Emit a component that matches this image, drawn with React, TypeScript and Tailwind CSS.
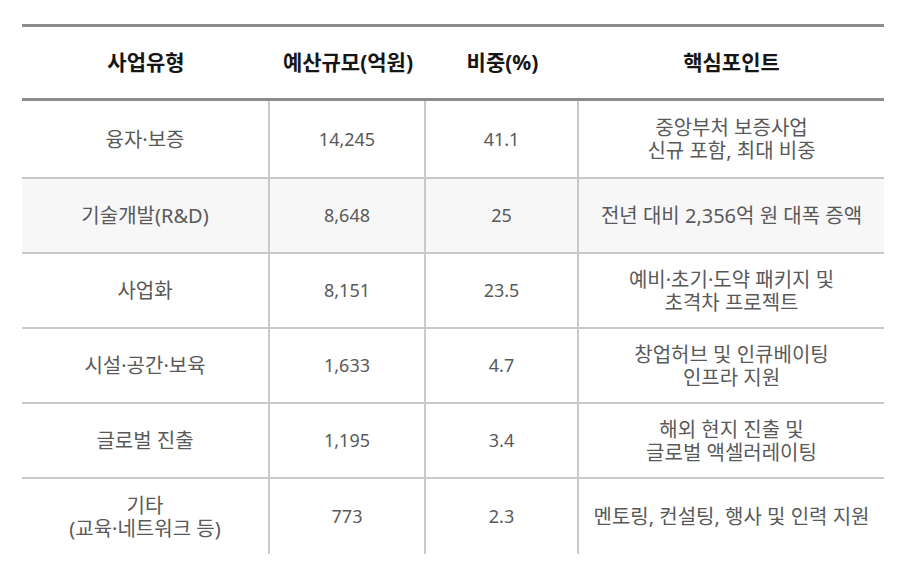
const rows: { type: string[]; budget: string; ratio: string; point: string[]; shaded?: boolean }[] = [
  { type: ["융자·보증"], budget: "14,245", ratio: "41.1", point: ["중앙부처 보증사업", "신규 포함, 최대 비중"] },
  { type: ["기술개발(R&D)"], budget: "8,648", ratio: "25", point: ["전년 대비 2,356억 원 대폭 증액"], shaded: true },
  { type: ["사업화"], budget: "8,151", ratio: "23.5", point: ["예비·초기·도약 패키지 및", "초격차 프로젝트"] },
  { type: ["시설·공간·보육"], budget: "1,633", ratio: "4.7", point: ["창업허브 및 인큐베이팅", "인프라 지원"] },
  { type: ["글로벌 진출"], budget: "1,195", ratio: "3.4", point: ["해외 현지 진출 및", "글로벌 액셀러레이팅"] },
  { type: ["기타", "(교육·네트워크 등)"], budget: "773", ratio: "2.3", point: ["멘토링, 컨설팅, 행사 및 인력 지원"] },
];

function Lines({ lines }: { lines: string[] }) {
  return (
    <div className="text-center">
      {lines.map((l) => (
        <div key={l}>{l}</div>
      ))}
    </div>
  );
}

export default function App() {
  return (
    <div className="w-[900px] h-[567px] bg-white pl-[22px] pt-[24px] font-['Noto_Sans','Noto_Sans_CJK_KR',sans-serif]">
      <div className="w-[862px]">
        {/* header */}
        <div className="grid grid-cols-[248px_156px_153px_305px] h-[77px] border-y-[3px] border-[#8c8c8c] text-[21px] font-bold text-[#161616]">
          <div className="flex items-center justify-center">사업유형</div>
          <div className="flex items-center justify-center">예산규모(억원)</div>
          <div className="flex items-center justify-center">비중(%)</div>
          <div className="flex items-center justify-center">핵심포인트</div>
        </div>
        {/* body */}
        {rows.map((r, i) => (
          <div
            key={r.budget}
            className={`grid grid-cols-[248px_156px_153px_305px] text-[20px] leading-[23px] text-[#595959] ${
              i === 0 ? "h-[78px]" : "h-[75px]"
            } ${i < rows.length - 1 ? "border-b-2 border-[#c9c9c9]" : ""} ${r.shaded ? "bg-[#f7f7f7]" : "bg-white"}`}
          >
            <div className="flex items-center justify-center border-r-2 border-[#c9c9c9]">
              <Lines lines={r.type} />
            </div>
            <div className="flex items-center justify-center border-r-2 border-[#c9c9c9] text-[18px]">{r.budget}</div>
            <div className="flex items-center justify-center border-r-2 border-[#c9c9c9] text-[18px]">{r.ratio}</div>
            <div className="flex items-center justify-center">
              <Lines lines={r.point} />
            </div>
          </div>
        ))}
      </div>
    </div>
  );
}
